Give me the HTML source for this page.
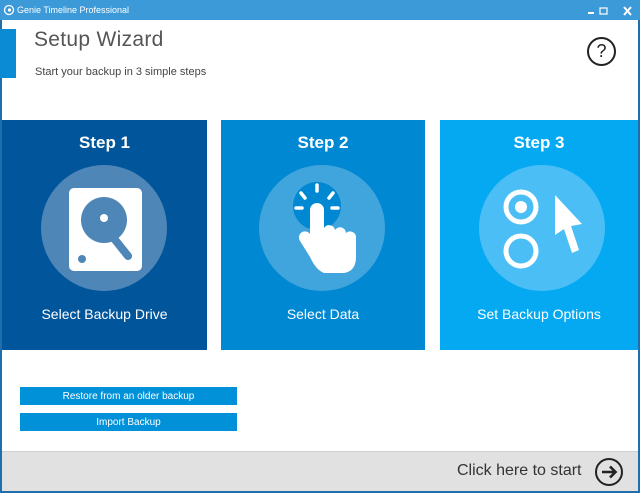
<!DOCTYPE html>
<html><head><style>
*{margin:0;padding:0;box-sizing:border-box}
body{width:640px;height:493px;background:#fff;font-family:"Liberation Sans",sans-serif;position:relative;overflow:hidden}
.abs{position:absolute}
.tile{position:absolute;top:120px;height:230px;color:#fff;text-align:center}
.tile h2{position:absolute;top:13px;width:100%;font-size:17px;font-weight:bold}
.tile p{position:absolute;top:186px;width:100%;font-size:14px}
.tile svg{position:absolute;left:0;top:0}
.btn{position:absolute;left:20px;width:217px;height:18px;background:#0091d9;color:#fff;font-size:10px;text-align:center;line-height:19px}
</style></head><body>
<div class="abs" style="left:0;top:0;width:640px;height:493px;border:2px solid #1f6fae;border-top:none"></div>
<div class="abs" style="left:0;top:0;width:640px;height:20px;background:#3d9ad9;color:#fff;font-size:9px;line-height:20px;padding-left:17px">Genie Timeline Professional</div>
<svg class="abs" style="left:3px;top:4px" width="12" height="12"><circle cx="6" cy="6" r="4.5" fill="none" stroke="#fff" stroke-width="1.3"/><circle cx="6.5" cy="6" r="1.6" fill="#fff"/></svg>
<svg class="abs" style="left:588px;top:5px" width="50" height="12"><rect x="0" y="7" width="6" height="2" fill="#fff"/><rect x="12" y="3" width="7" height="6" fill="none" stroke="#fff" stroke-width="1.2"/><path d="M36 2 L43 10 M43 2 L36 10" stroke="#fff" stroke-width="2"/></svg>
<div class="abs" style="left:0;top:29px;width:16px;height:49px;background:#0a8bd4"></div>
<div class="abs" style="left:34px;top:28px;font-size:21px;color:#555;letter-spacing:0.3px;font-weight:300">Setup Wizard</div>
<div class="abs" style="left:35px;top:66px;font-size:11px;color:#444">Start your backup in 3 simple steps</div>
<div class="abs" style="left:587px;top:37px;width:29px;height:29px;border:2px solid #222;border-radius:50%;font-size:18px;text-align:center;line-height:25px;color:#222">?</div>

<div class="tile" style="left:2px;width:205px;background:#00559b">
<svg width="205" height="230"><circle cx="102" cy="108" r="63" fill="#4f86b8"/>
<rect x="67" y="68" width="73" height="83" rx="5" fill="#fff"/>
<circle cx="102" cy="100" r="23" fill="#4f86b8"/><circle cx="102" cy="98" r="4" fill="#fff"/>
<line x1="110" y1="116" x2="126" y2="136" stroke="#4f86b8" stroke-width="8" stroke-linecap="round"/>
<circle cx="80" cy="139" r="4" fill="#4f86b8"/></svg>
<h2>Step 1</h2><p>Select Backup Drive</p></div>

<div class="tile" style="left:221px;width:204px;background:#0088d2">
<svg width="204" height="230"><circle cx="101" cy="108" r="63" fill="#40a4dd"/>
<circle cx="96" cy="86" r="24" fill="#0088d2"/>
<g stroke="#fff" stroke-width="3.5" stroke-linecap="round"><line x1="96" y1="65" x2="96" y2="71"/><line x1="80" y1="73" x2="84" y2="78"/><line x1="112" y1="73" x2="108" y2="78"/><line x1="75" y1="88" x2="81" y2="88"/><line x1="111" y1="88" x2="117" y2="88"/></g>
<path d="M89 90 a7 7 0 0 1 14 0 v18 a6 6 0 0 1 11 2 a6 6 0 0 1 11 3 a6 6 0 0 1 10 4 v20 q0 14 -12 16 h-20 q-8 -3 -14 -16 l-10 -16 a6 6 0 0 1 10 -7 l0 0 z" fill="#fff"/></svg>
<h2>Step 2</h2><p>Select Data</p></div>

<div class="tile" style="left:440px;width:198px;background:#04a9f2">
<svg width="198" height="230"><circle cx="102" cy="108" r="63" fill="#4bbff5"/>
<circle cx="81" cy="87" r="15" fill="none" stroke="#fff" stroke-width="5"/><circle cx="81" cy="87" r="6" fill="#fff"/>
<circle cx="81" cy="131" r="15" fill="none" stroke="#fff" stroke-width="5"/>
<path d="M115 75 L115 115 L124 109 L132 133 L139 130 L131 106 L142 104 Z" fill="#fff"/></svg>
<h2>Step 3</h2><p>Set Backup Options</p></div>

<div class="btn" style="top:387px">Restore from an older backup</div>
<div class="btn" style="top:413px">Import Backup</div>

<div class="abs" style="left:2px;top:451px;width:636px;height:40px;background:#e1e1e1;border-top:1px solid #d0d0d0"></div>
<div class="abs" style="left:457px;top:462px;font-size:16px;color:#333">Click here to start</div>
<svg class="abs" style="left:594px;top:457px" width="30" height="30"><circle cx="15" cy="15" r="13" fill="none" stroke="#222" stroke-width="2"/><path d="M8 15 H21 M16 9.5 L21.5 15 L16 20.5" fill="none" stroke="#222" stroke-width="2.6"/></svg>
</body></html>
